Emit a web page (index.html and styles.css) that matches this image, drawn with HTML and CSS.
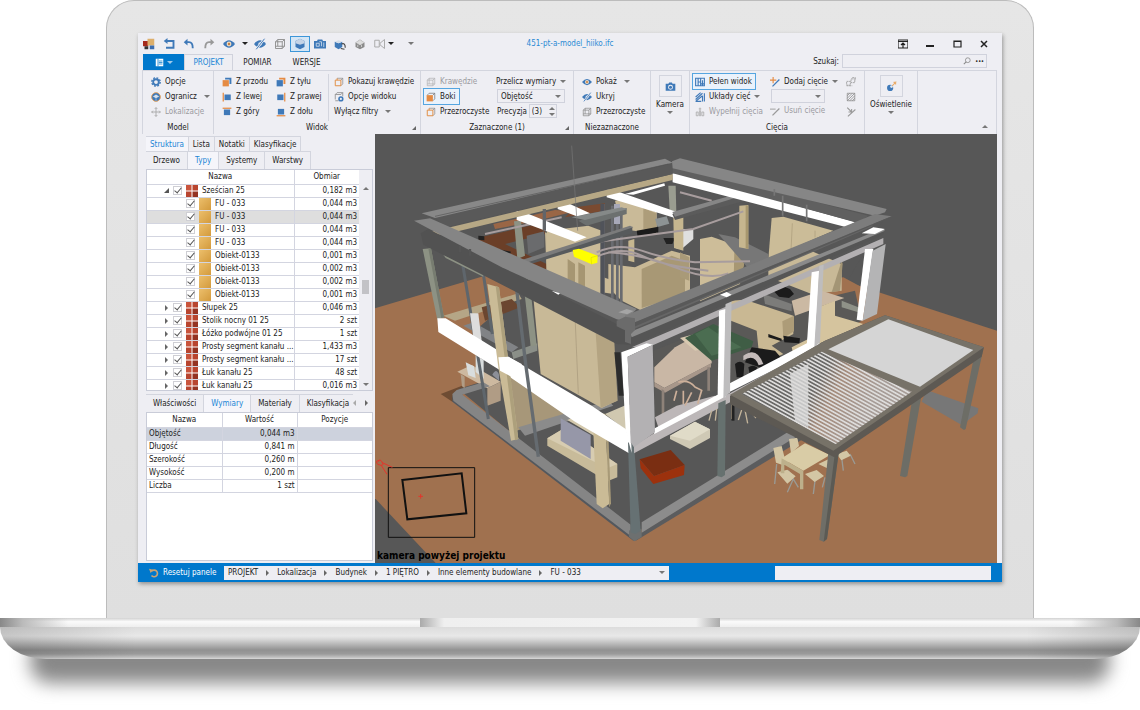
FILE: index.html
```html
<!DOCTYPE html>
<html lang="pl">
<head>
    <meta charset="UTF-8">
    <meta name="viewport" content="width=device-width, initial-scale=1.0">
    <title>451-pt-a-model_hiiko.ifc</title>
    <link rel="stylesheet" href="styles.css">
</head>
<body>
    <!-- shared icons -->
    <svg class="defs" width="0" height="0" aria-hidden="true">
        <symbol id="i-cube" viewBox="0 0 16 16"><path d="M2 5h9v9H2zM2 5l3-3h9v9l-3 3M11 5l3-3M5 2v9H2M5 11h9" fill="none" stroke="#8b8b8b" stroke-width="1.2"/></symbol>
        <symbol id="i-cube-o" viewBox="0 0 16 16"><path d="M5 2h9v9l-3 3M11 5l3-3" fill="none" stroke="#8b8b8b" stroke-width="1.2"/><path d="M2 5h9v9H2zM5 5V2" fill="none" stroke="#e08a3c" stroke-width="1.5"/></symbol>
        <symbol id="i-cube-s" viewBox="0 0 16 16"><path d="M2 5l3-3h9v9l-3 3M11 5l3-3" fill="none" stroke="#777" stroke-width="1.2"/><path d="M1 5h10v10H1z" fill="#e58b43"/></symbol>
        <symbol id="i-front" viewBox="0 0 16 16"><path d="M5 1h10v10h-3V4H5z" fill="#3f79b8"/><path d="M1 5h10v10H1z" fill="#e58b43"/></symbol>
        <symbol id="i-back" viewBox="0 0 16 16"><path d="M5 1h10v10h-3V4H5z" fill="#e58b43"/><path d="M1 5h10v10H1z" fill="#3f79b8"/></symbol>
        <symbol id="i-left" viewBox="0 0 16 16"><path d="M1 1h2v14H1z" fill="#e58b43"/><path d="M4 4h10v9H4z" fill="#3f79b8"/></symbol>
        <symbol id="i-right" viewBox="0 0 16 16"><path d="M13 1h2v14h-2z" fill="#e58b43"/><path d="M2 4h10v9H2z" fill="#3f79b8"/></symbol>
        <symbol id="i-top" viewBox="0 0 16 16"><path d="M1 1h14v2H1z" fill="#e58b43"/><path d="M3 4h10v9H3z" fill="#3f79b8"/></symbol>
        <symbol id="i-bottom" viewBox="0 0 16 16"><path d="M1 13h14v2H1z" fill="#e58b43"/><path d="M3 3h10v9H3z" fill="#3f79b8"/></symbol>
        <symbol id="i-eye" viewBox="0 0 16 16"><path d="M0 8q8-10 16 0q-8 10-16 0z" fill="#3f79b8"/><circle cx="8" cy="8" r="3.2" fill="#f0dcc4"/><circle cx="8" cy="8" r="1.6" fill="#c97f3d"/></symbol>
        <symbol id="i-hide" viewBox="0 0 16 16"><path d="M0 8q8-10 16 0q-8 10-16 0z" fill="#3f79b8"/><circle cx="8" cy="8" r="2.4" fill="#cfdcec"/><path d="M3 15L14 1" stroke="#eeeef3" stroke-width="3"/><path d="M3 15L14 1" stroke="#3f79b8" stroke-width="1.3"/></symbol>
        <symbol id="i-gear" viewBox="0 0 16 16"><circle cx="8" cy="8" r="4.5" fill="none" stroke="#3f79b8" stroke-width="3"/><circle cx="8" cy="8" r="6.7" fill="none" stroke="#3f79b8" stroke-width="2.2" stroke-dasharray="2.9 2.36"/></symbol>
        <symbol id="i-camera" viewBox="0 0 16 16"><path d="M1 4h4l1-2h4l1 2h4v10H1z" fill="#3f79b8"/><circle cx="8" cy="9" r="3.6" fill="#eeeef3"/><circle cx="8" cy="9" r="2.2" fill="#3f79b8"/></symbol>
        <symbol id="i-blocks" viewBox="0 0 12 12"><path d="M0 0h6v6H0z" fill="#c9543c"/><path d="M6 0h6v6H6zM0 6h6v6H0z" fill="#b8452f"/><path d="M6 6h6v6H6z" fill="#943322"/><path d="M6 0v12M0 6h12" stroke="#fff" stroke-width="1"/></symbol>
        <symbol id="i-undo" viewBox="0 0 16 16"><path d="M6 1L1 5.500L6 10z"/><path d="M4 5.500h4q5 0 5 8" fill="none" stroke="currentColor" stroke-width="2.500"/></symbol>
    </svg>

    <div class="laptop">
        <div class="lid">
            <div class="window">
                <header class="titlebar">
                    <div class="quick">
                        <button class="qbtn" aria-label="Program"><svg viewBox="0 0 16 16"><path d="M0 4h7v7H0z" fill="#a52a1c"/><path d="M6 1h9v9H6z" fill="#ddaf6c"/><path d="M9 10h6v5H9z" fill="#3b6db0"/><path d="M2 11h5v4H2z" fill="#333"/></svg></button>
                        <button class="qbtn" aria-label="Przywróć"><svg viewBox="0 0 16 16"><path d="M6 0L1 4l5 4z" fill="#3f79b8"/><path d="M4 4h10v9H4" fill="none" stroke="#3f79b8" stroke-width="2.500"/></svg></button>
                        <button class="qbtn blue" aria-label="Cofnij"><svg viewBox="0 0 16 16"><use href="#i-undo"/></svg></button>
                        <button class="qbtn grey flip" aria-label="Ponów"><svg viewBox="0 0 16 16"><use href="#i-undo"/></svg></button>
                        <button class="qbtn" aria-label="Pokaż"><svg><use href="#i-eye"/></svg></button>
                        <button class="qcaret" aria-label="Więcej"><i class="caret dark"></i></button>
                        <button class="qbtn" aria-label="Ukryj"><svg><use href="#i-hide"/></svg></button>
                        <button class="qbtn" aria-label="Przezroczyste"><svg><use href="#i-cube"/></svg></button>
                        <button class="qbtn on" aria-label="Bryła"><svg viewBox="0 0 16 16"><path d="M2 4l6-3 6 3v8l-6 3-6-3z" fill="#3f79b8"/><path d="M2 4l6-3 6 3v3l-6 2-6-2z" fill="#c5d4e6"/></svg></button>
                        <button class="qbtn" aria-label="Kamera"><svg viewBox="0 0 16 16"><path d="M0 4h4l1-2h6l1 2h4v10H0z" fill="#3f79b8"/><path d="M3 7h4v4H3zM7 5h3v6M13 6v6" fill="none" stroke="#dce6f1"/></svg></button>
                        <button class="qbtn" aria-label="Obróć"><svg viewBox="0 0 16 16"><path d="M1 5l5 2 5-2v7l-5 3-5-3z" fill="#3f79b8"/><path d="M1 5l5-2 5 2-5 2z" fill="#d4dde8"/><path d="M10 8q5-2 5 5M9 14l5 1" fill="none" stroke="#444" stroke-width="1.500"/></svg></button>
                        <button class="qbtn" aria-label="Szara bryła"><svg viewBox="0 0 16 16"><path d="M2 6l6-4 6 4v6l-6 3-6-3z" fill="#8b8b8b"/><path d="M3 6l5-3 5 3-5 3zM5 9v3M10 9v3" fill="#ddd" stroke="#ddd"/></svg></button>
                        <button class="qbtn" aria-label="Widok"><svg viewBox="0 0 16 16"><path d="M1 3h6v9H1zM8 7l6-5v12L8 9z" fill="none" stroke="#aaa" stroke-width="1.300"/></svg></button>
                        <button class="qcaret tight" aria-label="Więcej"><i class="caret dark"></i></button>
                        <button class="qcaret last" aria-label="Dostosuj"><i class="caret"></i></button>
                    </div>
                    <div class="title">451-pt-a-model_hiiko.ifc</div>
                    <div class="controls">
                        <button aria-label="Wstążka"><svg viewBox="0 0 10 10"><path d="M0 1h10v8H0zM0 2.500h10M5 9V4M3 6l2-2 2 2" fill="none" stroke="#222" stroke-width="1.200"/></svg></button>
                        <button aria-label="Minimalizuj"><svg viewBox="0 0 10 10"><path d="M1 6h8v2H1z" fill="#222"/></svg></button>
                        <button aria-label="Maksymalizuj"><svg viewBox="0 0 10 10"><path d="M2 2h7v6H2zM2 2.500h7" fill="none" stroke="#222" stroke-width="1.200"/></svg></button>
                        <button aria-label="Zamknij"><svg viewBox="0 0 10 10"><path d="M2 2l6 6M8 2L2 8" stroke="#222" stroke-width="1.500"/></svg></button>
                    </div>
                </header>

                <div class="tabbar">
                    <button class="file" aria-label="Menu"><svg viewBox="0 0 12 12"><path d="M1 1h10v10H1z" fill="#fff"/><path d="M4 1v10M5 4h5M5 6h5M5 8h5" stroke="#0078cc"/></svg><i class="caret light"></i></button>
                    <button class="tab active">PROJEKT</button>
                    <button class="tab">POMIAR</button>
                    <button class="tab">WERSJE</button>
                    <label class="search-label" for="search">Szukaj:</label>
                    <div class="search">
                        <input id="search" type="text">
                        <svg viewBox="0 0 10 10"><circle cx="6" cy="4" r="3" fill="none" stroke="#888"/><path d="M4 6L1 9" stroke="#888" stroke-width="1.300"/></svg>
                        <b>•••</b>
                    </div>
                </div>

                <section class="ribbon">
                    <div class="group">
                        <div class="cols">
                            <div class="col">
                                <button class="cmd"><svg><use href="#i-gear"/></svg>Opcje</button>
                                <button class="cmd"><svg viewBox="0 0 16 16"><circle cx="8" cy="8" r="7" fill="#3f79b8" stroke="#e0a060" stroke-width="1.500"/><path d="M3 7l5-3 5 3-5 3z" fill="#d5e0ec"/><path d="M8 10v4" stroke="#d5e0ec"/></svg>Ogranicz<i class="caret far"></i></button>
                                <button class="cmd off"><svg viewBox="0 0 16 16"><path d="M8 1v14M1 8h14M6 3l2-2 2 2M6 13l2 2 2-2M3 6L1 8l2 2M13 6l2 2-2 2" fill="none" stroke="#aaa" stroke-width="1.500"/></svg>Lokalizacje</button>
                            </div>
                        </div>
                        <h2>Model</h2>
                    </div>
                    <div class="group">
                        <div class="cols">
                            <div class="col c-view">
                                <button class="cmd"><svg><use href="#i-front"/></svg>Z przodu</button>
                                <button class="cmd"><svg><use href="#i-left"/></svg>Z lewej</button>
                                <button class="cmd"><svg><use href="#i-top"/></svg>Z góry</button>
                            </div>
                            <div class="col c-view">
                                <button class="cmd"><svg><use href="#i-back"/></svg>Z tyłu</button>
                                <button class="cmd"><svg><use href="#i-right"/></svg>Z prawej</button>
                                <button class="cmd"><svg><use href="#i-bottom"/></svg>Z dołu</button>
                            </div>
                            <div class="col ruled">
                                <button class="cmd"><svg><use href="#i-cube-o"/></svg>Pokazuj krawędzie</button>
                                <button class="cmd"><svg viewBox="0 0 16 16"><path d="M2 12V4l3-3h9v6M2 4h9l3-3M2 14h5" fill="none" stroke="#8b8b8b" stroke-width="1.300"/><circle cx="11" cy="11" r="3" fill="none" stroke="#3f79b8" stroke-width="2.500"/></svg>Opcje widoku</button>
                                <button class="cmd">Wyłącz filtry<i class="caret far"></i></button>
                            </div>
                        </div>
                        <h2>Widok</h2><i class="corner"></i>
                    </div>
                    <div class="group">
                        <div class="cols">
                            <div class="col c-edges">
                                <button class="cmd off"><svg><use href="#i-cube"/></svg>Krawędzie</button>
                                <button class="cmd picked"><svg><use href="#i-cube-s"/></svg>Boki</button>
                                <button class="cmd"><svg><use href="#i-cube-o"/></svg>Przezroczyste</button>
                            </div>
                            <div class="col">
                                <button class="cmd">Przelicz wymiary<i class="caret"></i></button>
                                <div class="pick"><select aria-label="Wymiar"><option>Objętość</option><option>Długość</option></select><i class="caret"></i></div>
                                <div class="precision"><label for="precision">Precyzja</label><div class="spin"><input id="precision" type="text" value="(3)"><span><i class="caret up"></i><i class="caret"></i></span></div></div>
                            </div>
                        </div>
                        <h2>Zaznaczone (1)</h2><i class="corner"></i>
                    </div>
                    <div class="group">
                        <div class="cols">
                            <div class="col">
                                <button class="cmd"><svg><use href="#i-eye"/></svg>Pokaż<i class="caret far"></i></button>
                                <button class="cmd"><svg><use href="#i-hide"/></svg>Ukryj</button>
                                <button class="cmd"><svg><use href="#i-cube"/></svg>Przezroczyste</button>
                            </div>
                        </div>
                        <h2>Niezaznaczone</h2>
                    </div>
                    <div class="group">
                        <button class="big"><span><svg><use href="#i-camera"/></svg></span>Kamera<i class="caret"></i></button>
                    </div>
                    <div class="group">
                        <div class="cols">
                            <div class="col c-cut">
                                <button class="cmd picked"><svg viewBox="0 0 16 16"><path d="M1 2h14v12H1zM5 2v12M9 2v12M5 8h4M12 5v9M9 11h6" fill="none" stroke="#3f79b8" stroke-width="1.800"/></svg>Pełen widok</button>
                                <button class="cmd"><svg viewBox="0 0 16 16"><path d="M1 8L9 1M1 12L12 2M1 15h9M1 15L12 6M12 6v9M15 2v13" fill="none" stroke="#3f79b8" stroke-width="1.800"/></svg>Układy cięć<i class="caret"></i></button>
                                <button class="cmd off"><svg viewBox="0 0 16 16"><path d="M2 8h3v6H2zM7 6h2v8H7zM11 8h3v6h-3zM8 1v4M6 3h4" fill="none" stroke="#aaa" stroke-width="1.300"/></svg>Wypełnij cięcia</button>
                            </div>
                            <div class="col c-add">
                                <button class="cmd"><svg viewBox="0 0 16 16"><path d="M5 0v10M0 5h10" stroke="#e58b43" stroke-width="1.800"/><path d="M4 15L15 4" stroke="#3f79b8" stroke-width="2"/></svg>Dodaj cięcie<i class="caret"></i></button>
                                <div class="pick narrow"><select aria-label="Cięcie"><option></option></select><i class="caret"></i></div>
                                <button class="cmd off"><svg viewBox="0 0 16 16"><path d="M0 5h9" stroke="#aaa" stroke-width="1.800"/><path d="M4 15L15 4" stroke="#999" stroke-width="2"/></svg>Usuń cięcie</button>
                            </div>
                            <div class="col">
                                <button class="cmd" aria-label="Zamień"><svg viewBox="0 0 16 16"><path d="M1 7h6v6H1zM8 3h6v6H8zM10 1h5v4M1 14h9" fill="none" stroke="#999" stroke-width="1.300" stroke-dasharray="3 1"/></svg></button>
                                <button class="cmd" aria-label="Kreskowanie"><svg viewBox="0 0 16 16"><path d="M2 2h12v12H2zM2 6l4-4M2 10l8-8M2 14L14 2M6 14l8-8M10 14l4-4" fill="none" stroke="#888" stroke-width="1.200"/></svg></button>
                                <button class="cmd" aria-label="Odwróć"><svg viewBox="0 0 16 16"><path d="M2 1l7 7M9 3v5H4M3 15L15 4" fill="none" stroke="#999" stroke-width="1.700"/></svg></button>
                            </div>
                        </div>
                        <h2>Cięcia</h2>
                    </div>
                    <div class="group">
                        <button class="big"><span><svg viewBox="0 0 16 16"><circle cx="6" cy="10" r="4.500" fill="#3f79b8"/><circle cx="8" cy="8" r="2" fill="#dfe8f2"/><path d="M9 7l6-6M11 2h3v3" fill="none" stroke="#e9ab68" stroke-width="1.500"/></svg></span>Oświetlenie<i class="caret"></i></button>
                    </div>
                    <div class="group end"><i class="caret up"></i></div>
                </section>

                <main class="work">
                    <aside class="side">
                        <div class="tabs slim">
                            <button class="active">Struktura</button><button>Lista</button><button>Notatki</button><button>Klasyfikacje</button>
                        </div>
                        <div class="tabs">
                            <button>Drzewo</button><button class="active">Typy</button><button>Systemy</button><button>Warstwy</button>
                        </div>
                        <div class="tree">
                            <table>
                                <thead><tr><th>Nazwa</th><th class="val">Obmiar</th></tr></thead>
                                <tbody>
                                    <tr><td><label class="node"><i class="arrow open"></i><input type="checkbox" checked><svg><use href="#i-blocks"/></svg><span>Sześcian 25</span></label></td><td>0,182 m3</td></tr>
                                    <tr><td><label class="node leaf"><input type="checkbox" checked><i class="box"></i><span>FU - 033</span></label></td><td>0,044 m3</td></tr>
                                    <tr class="selected"><td><label class="node leaf"><input type="checkbox" checked><i class="box"></i><span>FU - 033</span></label></td><td>0,044 m3</td></tr>
                                    <tr><td><label class="node leaf"><input type="checkbox" checked><i class="box"></i><span>FU - 033</span></label></td><td>0,044 m3</td></tr>
                                    <tr><td><label class="node leaf"><input type="checkbox" checked><i class="box"></i><span>FU - 033</span></label></td><td>0,044 m3</td></tr>
                                    <tr><td><label class="node leaf"><input type="checkbox" checked><i class="box"></i><span>Obiekt-0133</span></label></td><td>0,001 m3</td></tr>
                                    <tr><td><label class="node leaf"><input type="checkbox" checked><i class="box"></i><span>Obiekt-0133</span></label></td><td>0,002 m3</td></tr>
                                    <tr><td><label class="node leaf"><input type="checkbox" checked><i class="box"></i><span>Obiekt-0133</span></label></td><td>0,002 m3</td></tr>
                                    <tr><td><label class="node leaf"><input type="checkbox" checked><i class="box"></i><span>Obiekt-0133</span></label></td><td>0,001 m3</td></tr>
                                    <tr><td><label class="node"><i class="arrow"></i><input type="checkbox" checked><svg><use href="#i-blocks"/></svg><span>Słupek 25</span></label></td><td>0,046 m3</td></tr>
                                    <tr><td><label class="node"><i class="arrow"></i><input type="checkbox" checked><svg><use href="#i-blocks"/></svg><span>Stolik nocny 01 25</span></label></td><td>2 szt</td></tr>
                                    <tr><td><label class="node"><i class="arrow"></i><input type="checkbox" checked><svg><use href="#i-blocks"/></svg><span>Łóżko podwójne 01 25</span></label></td><td>1 szt</td></tr>
                                    <tr><td><label class="node"><i class="arrow"></i><input type="checkbox" checked><svg><use href="#i-blocks"/></svg><span>Prosty segment kanału ...</span></label></td><td>1,433 m3</td></tr>
                                    <tr><td><label class="node"><i class="arrow"></i><input type="checkbox" checked><svg><use href="#i-blocks"/></svg><span>Prosty segment kanału ...</span></label></td><td>17 szt</td></tr>
                                    <tr><td><label class="node"><i class="arrow"></i><input type="checkbox" checked><svg><use href="#i-blocks"/></svg><span>Łuk kanału 25</span></label></td><td>48 szt</td></tr>
                                    <tr><td><label class="node"><i class="arrow"></i><input type="checkbox" checked><svg><use href="#i-blocks"/></svg><span>Łuk kanału 25</span></label></td><td>0,016 m3</td></tr>
                                </tbody>
                            </table>
                            <div class="scroll"><i class="caret up"></i><b></b><i class="caret"></i></div>
                        </div>
                        <div class="tabs lower">
                            <button>Właściwości</button><button class="active">Wymiary</button><button>Materiały</button><button>Klasyfikacja</button><i class="arrow back"></i><i class="arrow"></i>
                        </div>
                        <div class="props">
                            <table>
                                <thead><tr><th>Nazwa</th><th>Wartość</th><th>Pozycje</th></tr></thead>
                                <tbody>
                                    <tr class="selected"><td>Objętość</td><td>0,044 m3</td><td></td></tr>
                                    <tr><td>Długość</td><td>0,841 m</td><td></td></tr>
                                    <tr><td>Szerokość</td><td>0,260 m</td><td></td></tr>
                                    <tr><td>Wysokość</td><td>0,200 m</td><td></td></tr>
                                    <tr><td>Liczba</td><td>1 szt</td><td></td></tr>
                                </tbody>
                            </table>
                        </div>
                    </aside>

                    <div class="view">
                        <svg class="scene" viewBox="0 0 1866 1287" preserveAspectRatio="xMinYMid slice" role="img" aria-label="Model 3D">
                            <defs>
                                <pattern id="louvre" width="40" height="10" patternUnits="userSpaceOnUse" patternTransform="rotate(29)">
                                    <rect width="40" height="5" fill="#dddcdb"/>
                                </pattern>
                                <linearGradient id="under" x1="0" y1="0" x2="1" y2=".3"><stop offset=".5" stop-color="#6a6967"/><stop offset=".62" stop-color="#a58c7c"/><stop offset=".85" stop-color="#a79d98"/></linearGradient>
                            </defs>
                            <rect width="1866" height="1287" fill="#575757"/>
                            <!-- ground -->
                            <path d="M0 523L330 425 800 300 1405 440 1866 590V1287H182L0 1093z" fill="#a0714f"/>
                            <path d="M197 780L267 753 260 800 232 803z" fill="#6e4c33"/>
                            <!-- roof opening, floors -->
                            <path d="M150 250L890 90 1530 250 1400 470 1080 700 750 640 440 460z" fill="#575757"/>
                            <path d="M250 765L330 740 300 590 450 460 1440 470 1400 620 1290 900 777 1200z" fill="#575757"/>
                            <path d="M1340 440L1405 430 1480 470 1450 560 1330 560z" fill="#a0714f"/>
                            <path d="M315 310L510 265 510 300 390 330 515 390 515 410 300 335z" fill="#6b3f28"/>
                            <path d="M355 270L540 228 600 232 480 262 360 285z" fill="#9a6646"/>
                            <path d="M600 220L690 208 690 230 570 250z" fill="#7a4a30"/>
                            <!-- left rooms -->
                            <path d="M205 545L430 478 440 495 240 560z" fill="#b5a686"/>
                            <path d="M320 520L410 495 435 520 330 560z" fill="#6b4630"/>
                            <path d="M265 575L295 565 430 640 410 655z" fill="#818386"/>
                            <path d="M410 655L487 628 487 650 415 675z" fill="#8b8f88"/>
                            <path d="M510 295L580 330 600 400 715 440 715 480 585 460 515 420z" fill="#c8b997"/>
                            <path d="M400 680L600 790V832L425 890z" fill="#a79779"/>
                            <path d="M430 880L700 800 715 815 450 905z" fill="#8b8b8b"/>
                            <path d="M475 490L600 545 715 622 725 800 680 822 497 720z" fill="#c8b997"/>
                            <path d="M662 596L718 625 728 800 677 822z" fill="#b4a482"/>
                            <path d="M600 545L610 780" stroke="#a6977a" stroke-width="2"/>
                            <!-- desk -->
                            <path d="M247 713L290 693 377 743 337 763z" fill="#cdb9a0"/>
                            <path d="M337 763L377 743V800L337 815zM257 720l12 8v35l-8-6z" fill="#b09c85"/>
                            <path d="M272 685L297 697 302 732 280 724zM302 664l24 14v56l-24-20z" fill="#d9dddd"/>
                            <path d="M352 722q12-22 20 0v18z" fill="#8c8f98"/>
                            <!-- base -->
                            <path d="M232 785L767 1200 777 1222 232 803z" fill="#53585e"/>
                            <path d="M232 780L245 768 325 745 345 757 262 782 767 1172V1206L235 800z" fill="#858585"/>
                            <path d="M800 1195L1265 903 1300 905 780 1222z" fill="#5b5c5e"/>
                            <path d="M800 1165L1245 890 1268 905 800 1196z" fill="#8c8c8c"/>
                            <path d="M762 1190l20-15 18 12v22l-22 13-16-14z" fill="#6d7070"/>
                            <!-- bench and tv -->
                            <path d="M517 913L567 883 727 990V1030L697 1042 517 935z" fill="#c8bb9a"/>
                            <path d="M517 913L567 883 727 990 697 1003z" fill="#d7ccb1"/>
                            <path d="M577 858L622 838 747 895 690 925z" fill="#d3c8ac"/>
                            <path d="M557 853L647 903V975L557 920z" fill="#9697a8"/>
                            <path d="M690 840L760 810 830 850 760 895z" fill="#d0c8b0"/>
                            <path d="M652 830L690 840 703 1110 683 1123 665 1110z" fill="#cabb96"/>
                            <path d="M690 840l8 8 10 260-5 12z" fill="#a89a78"/>
                            <!-- sofas -->
                            <path d="M794 976L887 948 929 993 837 1026z" fill="#7a2e12"/>
                            <path d="M794 976L837 1026 835 1050 797 1003zM837 1026L929 993 927 1023 835 1050z" fill="#9c310d"/>
                            <path d="M885 905L960 863 1005 886V912L945 945 885 915z" fill="#cfc9b5"/>
                            <path d="M885 905L960 863 1005 886 945 920z" fill="#e0dbc8"/>
                            <!-- rooms on the right side -->
                            <path d="M835 650L1060 560 1440 470 1460 560 1330 640 1060 750 840 860z" fill="#5a5957"/>
                            <path d="M1180 378L1260 330 1400 390 1400 470 1310 480 1180 430z" fill="#c8b997"/>
                            <path d="M838 700L900 640 945 615 1010 645 1010 688 868 762 838 745z" fill="#c9b7a5"/>
                            <path d="M868 762L1008 688V700L870 776 838 758V745z" fill="#a8978a"/>
                            <path d="M915 612L960 600 1010 640 960 650z" fill="#d8c9b0"/>
                            <path d="M860 765L868 770V860H860zM997 700h8v70h-8z" fill="#8e8279"/>
                            <path d="M840 850L905 815 1020 785 1020 800 850 880z" fill="#bdb7b8"/>
                            <path d="M930 612L1015 570 1135 622 1130 640 1010 680z" fill="#3f5d45"/>
                            <path d="M960 600L1000 580 1030 600 1100 640 1010 665z" fill="#4b6d51"/>
                            <path d="M1068 500L1110 497 1255 545V600L1190 635 1225 660 1155 690 1145 590 1068 560z" fill="#c9b893"/>
                            <path d="M1222 562L1257 545V592L1225 612z" fill="#ad9c78"/>
                            <path d="M1165 480L1250 510V532L1170 510z" fill="#7c7c7a"/>
                            <path d="M1250 500L1340 470 1408 492 1260 545z" fill="#cbb9a3"/>
                            <path d="M1330 520L1380 500 1380 545 1465 570 1390 605 1255 660 1250 640 1330 600z" fill="#d5c49e"/>
                            <path d="M1400 500L1450 520V535L1400 520z" fill="#8f9288"/>
                            <path d="M1400 380L1370 475 1395 470 1403 390z" fill="#a39575"/>
                            <path d="M1190 465l25-12 30 12 12 15-15 12-30-4zM1130 640l70 10 30 35-60 20-60-20zM1225 605l50 8-2 15-45-3zM1180 600l40 14v8l-40-12zM1080 690q15-14 28 0l-3 40h-20zM1120 700q14-10 26 0l-4 20h-18z" fill="#1b1b1b"/>
                            <path d="M1105 665q40-30 60 25l-14 4q-12-36-46-15z" fill="#c4bbb9"/>
                            <path d="M910 745q30-10 50 14l20 10-12 40M905 770l-8 30M925 770v40M950 775l-20 40" fill="none" stroke="#cdb09a" stroke-width="5"/>
                            <!-- room seen through the roof -->
                            <path d="M720 200L745 195 845 235V300L740 285z" fill="#c9ba98"/>
                            <path d="M805 222L843 238V300L805 285z" fill="#ad9d7a"/>
                            <path d="M515 290L640 275 680 290 680 480 580 460 515 420z" fill="#cbbc99"/>
                            <path d="M578 375L600 390V460L578 450zM610 385l20 10v80l-20-10z" fill="#a69672"/>
                            <path d="M780 400L890 350 945 365 945 480 800 530 740 500 700 460V390z" fill="#c9b996"/>
                            <path d="M800 405L890 365 930 380V480L800 522z" fill="#a89875"/>
                            <path d="M975 315L1010 308 1115 345 1095 450 975 502z" fill="#cdbd99"/>
                            <path d="M1078 352L1117 342 1100 425 1076 440z" fill="#a79773"/>
                            <path d="M1190 252L1225 248 1375 290 1180 375z" fill="#cbbc98"/>
                            <path d="M1252 268L1248 350M1320 290v20" stroke="#a99a78" stroke-width="2"/>
                            <path d="M1030 300L1080 310 1180 360 1180 400 1117 400z" fill="#777"/>
                            <path d="M915 355L943 370V440L915 430z" fill="#a99a78"/>
                            <path d="M910 285h45v30l-35 30h-15z" fill="#dfdfdf"/>
                            <path d="M840 255l35-8 8 22-35 10z" fill="#8d9394"/>
                            <path d="M785 290L850 278V295L788 310z" fill="#1b1b1b"/>
                            <path d="M865 312h35l-8 18h-18zM310 305l18 2v12l-18-2zM368 345l40 8-5 12z" fill="#222"/>
                            <path d="M455 305L508 292V340L460 360z" fill="#6a6b6d"/>
                            <path d="M1093 215L1120 213V345L1092 340zM760 320l18-5v70l-18-5zM895 250h30v100l-28-8z" fill="#c6b68f"/>
                            <path d="M1112 213l8 2v130l-8-2z" fill="#a7976f"/>
                            <path d="M880 155h22l2 80-20-8z" fill="#9a9d90"/>
                            <path d="M417 262L438 260 450 365 427 375zM443 430l20 4 22 200-18 3z" fill="#8d9284"/>
                            <!-- ducts -->
                            <path d="M685 210V500M712 215V505M727 215V515M739 240V515" fill="none" stroke="#696b70" stroke-width="8"/>
                            <path d="M682 210V495" stroke="#50535a" stroke-width="12"/>
                            <path d="M726 210V270" stroke="#a7a8b8" stroke-width="18"/>
                            <path d="M610 260L755 222V240L635 275z" fill="#6c706f"/>
                            <path d="M590 250L740 220 757 226 630 258z" fill="#858988"/>
                            <path d="M665 355Q730 325 800 350T960 385L1125 382M665 368Q740 335 800 365T1000 410M700 355Q800 360 900 400T1060 418M660 325L955 285 1105 232M560 250L330 300M915 175L1010 200" fill="none" stroke="#a89d9e" stroke-width="6"/>
                            <!-- inner beams -->
                            <path d="M450 382L772 278V298L460 392z" fill="#575a5c"/>
                            <path d="M440 378L765 275 775 280 450 388z" fill="#7b7b7b"/>
                            <path d="M425 232L440 232 635 310 600 323 425 258zM548 203L570 203 645 238 605 247 548 225zM695 167L715 168 908 235 900 252 695 190zM750 180L868 148 870 155 775 182z" fill="#fff"/>
                            <path d="M892 240L1105 178 1110 200 900 258z" fill="#5b5b5b"/>
                            <path d="M892 234L1100 176 1110 182 900 248z" fill="#868686"/>
                            <path d="M892 118L920 118 1440 265 1415 280 893 145z" fill="#fff"/>
                            <!-- back beams -->
                            <path d="M150 298L893 120V138L230 296 150 308z" fill="#b7a885"/>
                            <path d="M180 250L893 88V120L210 280z" fill="#595959"/>
                            <path d="M140 238L870 74 893 86 180 252z" fill="#888"/>
                            <path d="M180 247L880 90" stroke="#555" stroke-width="2"/>
                            <path d="M893 98L915 98 1480 245 1450 266 893 118z" fill="#606060"/>
                            <path d="M891 82L915 73 1535 225 1530 235 1500 245 893 103z" fill="#868686"/>
                            <path d="M1198 165v20M1223 185v60M1295 212v50" stroke="#777" stroke-width="5"/>
                            <!-- posts on the left -->
                            <path d="M143 345L168 343 207 550 187 557z" fill="#8d9284"/>
                            <path d="M160 343l8 0 39 207-8 3z" fill="#777c70"/>
                            <path d="M262 385L300 615 340 855M325 420L352 600" fill="none" stroke="#5f666c" stroke-width="9"/>
                            <path d="M285 538h25l12 100-24-8z" fill="#ddd"/>
                            <path d="M205 362L325 415V428L212 372z" fill="#8d9284"/>
                            <!-- floor beam -->
                            <path d="M187 553L212 553 400 668 650 815 752 885 777 955 762 958 600 863 380 712 190 594z" fill="#fff"/>
                            <path d="M337 450L372 460 430 915 408 920 370 700z" fill="#cabb96"/>
                            <path d="M362 455l10 5 58 455-10 4z" fill="#ada07c"/>
                            <path d="M370 670L400 668 440 690 440 745 375 710z" fill="#fff"/>
                            <path d="M418 408L452 690 490 968" fill="none" stroke="#656b70" stroke-width="10"/>
                            <path d="M759 925L777 933 797 1190 781 1200 767 1195z" fill="#667173"/>
                            <!-- right side frame -->
                            <path d="M777 935L842 895 1050 785 1345 630 1345 648 1065 805 777 958z" fill="#bcb7b8"/>
                            <path d="M835 885L1050 770 1050 788 838 900zM1060 750L1310 620 1345 632 1062 775z" fill="#fff"/>
                            <path d="M770 640L915 578 1525 312V330L915 598 830 635z" fill="#b3b0b2"/>
                            <path d="M1032 530L1052 525V790L1028 782z" fill="#fff"/>
                            <path d="M1052 490L1070 487 1065 775 1045 795z" fill="#bebdbe"/>
                            <path d="M1310 415L1333 410 1320 640 1295 640z" fill="#fff"/>
                            <path d="M1333 395L1346 392 1335 625 1318 640z" fill="#bebdbe"/>
                            <path d="M1470 345L1495 345 1463 560 1445 557z" fill="#fff"/>
                            <path d="M1493 350L1532 330 1506 540 1463 560z" fill="#b4b4b5"/>
                            <path d="M739 655L815 628 834 632 758 668 770 957 752 890z" fill="#fff"/>
                            <path d="M758 668L833 632 840 895 777 940 767 925z" fill="#b3b1b3"/>
                            <path d="M718 655h18l10 130h-15z" fill="#2c2c2c"/>
                            <!-- front beams -->
                            <path d="M137 298L160 285 765 590V632L725 630 400 462 145 332z" fill="#525252"/>
                            <path d="M765 602L1525 290V302L770 634z" fill="#555"/>
                            <path d="M765 594L1520 284 1530 290 770 610z" fill="#8a8a8a"/>
                            <path d="M755 570L1500 262 1490 278 765 590z" fill="#666"/>
                            <path d="M117 260L165 253 785 525 750 562 725 556 380 400z" fill="#858585"/>
                            <path d="M750 545L1500 240 1550 247 755 575z" fill="#7c7c7c"/>
                            <path d="M755 575L1550 247 1530 258 760 586z" fill="#595959"/>
                            <path d="M725 560l25-12 30 5v35l-12 12v30l-18-6v-35l-25-12z" fill="#6b6b6b"/>
                            <path d="M730 535l25-10 20 6-18 10z" fill="#a5a5a5"/>
                            <path d="M1460 298L1495 280 1530 285 1500 300zM1035 482l20-8 15 8-15 8zM530 470l25 8-5 4z" fill="#fff"/>
                            <path d="M255 335v20M285 345v20" stroke="#555" stroke-width="7"/>
                            <path d="M508 225v65" stroke="#626569" stroke-width="10"/>
                            <path d="M590 35L608 290" stroke="#777" stroke-width="2"/>
                            <!-- picked element -->
                            <path d="M593 348L612 344 668 365 667 386 650 391 597 368z" fill="#ff0"/>
                            <path d="M650 391l-2-20 20-6" fill="none" stroke="#dede00" stroke-width="2"/>
                            <!-- lower post and slab -->
                            <path d="M1030 808L1052 798 1050 1023 1040 1030 1027 1026z" fill="#66716f"/>
                            <path d="M1640 803L1655 768 1810 823 1808 838 1760 873z" fill="#777"/>
                            <path d="M1070 800v55M1010 830l-8 30M1025 825l-4 35M1100 828l-10 30M1110 828l8 40M1125 830l18 22" stroke="#c3b49a" stroke-width="4"/>
                            <path d="M1074 805v55" stroke="#222" stroke-width="9"/>
                            <!-- garden table -->
                            <path d="M1205 990l-6 60M1255 1035l-18 40M1240 1010l30 50M1320 1040l-5 40M1350 1030l-8 30M1400 970l5 40M1425 960l15 30" stroke="#9a9a94" stroke-width="4"/>
                            <path d="M1195 942l25-6 10 40 20 4-25 14-22-8zM1242 915l25-4 5 25-24 22zM1207 1015l30-8 25 20-25 22zM1290 1020l35-12 22 18-28 18zM1330 990l30-14v28zM1385 960l30-10 12 15-28 14z" fill="#d3c6a4"/>
                            <path d="M1220 973L1290 928 1365 963 1285 1010z" fill="#d9cca6"/>
                            <path d="M1220 973L1285 1010V1066H1275V1020L1228 992V1018H1217z" fill="#bdb08b"/>
                            <!-- pergola -->
                            <path d="M1360 955L1392 950 1356 1215 1346 1223 1333 1218z" fill="#6f6e67"/>
                            <path d="M1380 955l12-5-36 265-10 8z" fill="#5b5a54"/>
                            <path d="M1612 793L1640 780 1597 1026 1590 1030 1575 1026zM1795 678L1823 655 1772 885 1767 888 1755 880z" fill="#6d6d66"/>
                            <path d="M1065 785L1350 620 1530 544 1827 640 1820 668 1378 970 1065 810z" fill="#5d5953"/>
                            <path d="M1065 782L1350 620 1530 544 1827 640 1375 950z" fill="#777268"/>
                            <path d="M1100 780L1340 653 1610 773 1382 930z" fill="url(#under)"/>
                            <path d="M1245 720L1300 690 1300 880 1260 860z" fill="#c6c6c6"/>
                            <path d="M1100 780L1340 653 1610 773 1382 930z" fill="url(#louvre)"/>
                            <path d="M1360 646L1540 556 1795 648 1635 758z" fill="#d5d5d5"/>
                            <!-- navigator -->
                            <g fill="none" stroke="#111">
                                <path d="M40 1001H299V1210H40z" stroke-width="3"/>
                                <path d="M82 1038L260 1018 274 1138 97 1156z" stroke-width="6"/>
                                <path d="M8 985q6-14 14 0t-14 6q-10-12 6-12M20 985l32 15M18 993l18 28M137 1080v14M130 1087h14" stroke="#e3362c" stroke-width="3"/>
                            </g>
                        </svg>
                        <p class="hint">kamera powyżej projektu</p>
                    </div>
                </main>

                <footer class="status">
                    <button class="reset"><svg viewBox="0 0 12 12"><path d="M3 4a4 4 0 1 1 0 5" fill="none" stroke="#c9a374" stroke-width="2"/><path d="M0 1l5 1-3 4z" fill="#c9a374"/></svg>Resetuj panele</button>
                    <nav class="crumbs">
                        <a href="#">PROJEKT</a><i class="arrow"></i><a href="#">Lokalizacja</a><i class="arrow"></i><a href="#">Budynek</a><i class="arrow"></i><a href="#">1 PIĘTRO</a><i class="arrow"></i><a href="#">Inne elementy budowlane</a><i class="arrow"></i><a href="#">FU - 033</a>
                        <i class="caret"></i>
                    </nav>
                    <div class="progress"></div>
                </footer>
            </div>
        </div>
        <div class="hinge"><div class="notch"></div></div>
        <div class="base"></div>
    </div>
</body>
</html>
```
FILE: styles.css
```css
*{
    margin: 0;
    padding: 0;
    box-sizing: border-box;
}

html,body{
    height: 100%;
}

body{
    background-color: #fff;
    color: #222;
    font: 8px/13px "DejaVu Sans Condensed", "DejaVu Sans", sans-serif;
    overflow: hidden;
}

button,input,select{
    font: inherit;
    color: inherit;
    background: none;
    border: 0;
}

button{
    white-space: nowrap;
    cursor: pointer;
}

.defs{
    position: absolute;
}

/* laptop */

.laptop{
    height: 100%;
    display: flex;
    flex-direction: column;
    padding-bottom: 51px;
}

.lid{
    flex: 1;
    min-height: 0;
    display: flex;
    margin: 0 106px;
    padding: 32px 31px 36px;
    background: linear-gradient(#e6e6e6, #dfdfdf);
    border: solid #bcbcbc;
    border-width: 1px 1px 0;
    border-radius: 28px 28px 0 0;
}

.hinge{
    height: 9px;
    display: flex;
    justify-content: center;
    background: linear-gradient(90deg, #888, #bbb 2%, transparent 6%, transparent 94%, #bbb 98%, #888), linear-gradient(#d2d2d2, #fafafa 40%, #eee);
}

.notch{
    width: 300px;
    background: linear-gradient(90deg, #aaa, #efefef 8%, #f2f2f2 92%, #aaa);
}

.base{
    position: relative;
    height: 32px;
    border-radius: 0 0 46px 46px / 0 0 32px 32px;
    background: linear-gradient(90deg, rgba(0,0,0,.15), transparent 12%, transparent 90%, rgba(0,0,0,.15)), linear-gradient(#dcdcdc, #e8e8e8 28%, #d8d8d8 38%, #919191 72%, #9a9a9a 84%, #c8c8c8 97%, #ddd);
}

/* shadow on the desk */
.base::after{
    content: "";
    position: absolute;
    z-index: -1;
    inset: 10px 30px -24px;
    border-radius: 20px;
    background: #888;
    filter: blur(9px);
}

/* window */

.window{
    flex: 1;
    min-width: 0;
    display: flex;
    flex-direction: column;
    background: #eeeef3;
    box-shadow: 1px 2px 4px rgba(0,0,0,.35);
}

.titlebar{
    height: 21px;
    display: flex;
    align-items: center;
    justify-content: space-between;
}

.quick{
    display: flex;
    align-items: center;
    padding-left: 1px;
}

.qbtn{
    width: 20px;
    height: 16px;
    display: flex;
    align-items: center;
    justify-content: center;
}

.qbtn svg{
    width: 12px;
    height: 12px;
}

.qbtn.on{
    border: 1px solid #3c96d8;
    background: #d5e6f5;
}

.blue{
    color: #3f79b8;
    fill: #3f79b8;
}

.grey{
    color: #999;
    fill: #999;
}

.flip svg{
    transform: scaleX(-1);
}

.qcaret{
    width: 11px;
    height: 16px;
}

.qcaret.tight{
    margin-left: -5px;
}

.qcaret.last{
    margin-left: 9px;
}

.title{
    color: #2a8ad4;
    margin-right: 174px;
}

.controls{
    display: flex;
    gap: 17px;
    margin-right: 13px;
}

.controls button{
    width: 10px;
    height: 10px;
}

.controls svg{
    display: block;
}

.caret{
    display: inline-block;
    border: 3px solid transparent;
    border-top-color: #777;
    border-bottom: 0;
    vertical-align: middle;
}

.caret.dark{
    border-top-color: #222;
}

.caret.light{
    border-top-color: #9fc9ea;
}

.caret.up{
    border-top: 0;
    border-bottom: 3px solid #777;
}

.caret.far{
    margin-left: 3px;
}

.arrow{
    border: 3px solid transparent;
    border-left-color: #666;
    border-right: 0;
}

.arrow.back{
    border-left: 0;
    border-right: 3px solid #aaa;
}

.arrow.open{
    border: 0;
    border-left: 5px solid transparent;
    border-bottom: 5px solid #555;
}

.tabbar{
    display: flex;
    height: 16px;
    padding: 0 15px 0 5px;
}

.file{
    width: 41px;
    background: #0078cc;
    display: flex;
    align-items: center;
    justify-content: center;
    gap: 3px;
}

.file svg{
    width: 9px;
    height: 9px;
}

.tab{
    width: 49px;
}

.tab.active{
    color: #1a86d6;
    border: solid #d0d2dc;
    border-width: 1px 1px 0;
}

.search-label{
    margin-left: auto;
    padding: 1px 3px 0 0;
}

.search{
    width: 145px;
    height: 14px;
    display: flex;
    align-items: center;
    gap: 4px;
    padding-right: 2px;
    border: 1px solid #d0d2dc;
}

.search input{
    flex: 1;
    min-width: 0;
}

.search svg{
    width: 8px;
    height: 8px;
}

.search b{
    font-size: 5px;
}

/* ribbon */

.ribbon{
    display: grid;
    grid-template-columns: 71px 207px 153px 77px 39px 175px 53px 1fr;
    height: 64px;
    margin: 0 5px 0 4px;
    border: solid #d3d5de;
    border-width: 1px 1px 0;
}

.group{
    position: relative;
    display: flex;
    flex-direction: column;
    border-right: 1px solid #d3d5de;
}

.group.end{
    border: 0;
    align-items: flex-end;
    justify-content: flex-end;
    padding: 6px 8px;
}

.group h2{
    font-size: 8px;
    font-weight: normal;
    text-align: center;
}

.cols{
    display: flex;
    height: 50px;
    padding: 3px 0 0 6px;
}

.col{
    display: flex;
    flex-direction: column;
    align-items: flex-start;
}

.c-view{
    width: 54px;
}

.ruled{
    border-left: 1px solid #d3d5de;
    padding-left: 3px;
}

.c-edges{
    width: 70px;
}

.c-cut{
    width: 75px;
}

.c-add{
    width: 76px;
}

.cmd{
    height: 15px;
    display: flex;
    align-items: center;
    gap: 4px;
    padding: 0 2px;
}

.cmd svg{
    width: 10px;
    height: 10px;
}

.c-cut,.c-edges{
    margin-left: -3px;
}

.cmd.picked{
    padding: 0 3px 0 2px;
    background: #eaf2fb;
    outline: 1px solid #55a5e0;
}

.off{
    color: #9a9aa0;
}

.off use{
    opacity: .6;
}

.corner{
    position: absolute;
    right: 4px;
    bottom: 4px;
    border-left: 4px solid transparent;
    border-bottom: 4px solid #666;
}

.pick{
    position: relative;
    width: 68px;
    height: 14px;
    margin-left: 3px;
}

.pick.narrow{
    width: 54px;
}

.pick select{
    appearance: none;
    width: 100%;
    height: 14px;
    padding-left: 3px;
    border: 1px solid #d0d2dc;
}

.pick .caret{
    position: absolute;
    right: 4px;
    top: 6px;
}

.precision{
    display: flex;
    align-items: center;
    height: 16px;
    margin-left: 3px;
    gap: 2px;
}

.spin{
    width: 28px;
    height: 14px;
    display: flex;
    align-items: center;
    padding: 0 2px;
    border: 1px solid #d0d2dc;
}

.spin input{
    width: 17px;
}

.spin span{
    display: flex;
    flex-direction: column;
    gap: 3px;
}

.big{
    display: flex;
    flex-direction: column;
    align-items: center;
    padding-top: 4px;
}

.big span{
    width: 23px;
    height: 22px;
    display: flex;
    align-items: center;
    justify-content: center;
    margin-bottom: 1px;
    border: 1px solid #d3d5de;
}

.big svg{
    width: 11px;
    height: 11px;
}

/* side panel */

.work{
    flex: 1;
    min-height: 0;
    display: flex;
    padding-right: 5px;
}

.side{
    width: 237px;
    display: flex;
    flex-direction: column;
    padding: 2px 2px 2px 8px;
}

.tabs{
    display: flex;
    align-items: center;
    height: 18px;
}

.tabs button{
    height: 100%;
    padding: 0 7px;
    border-right: 1px solid #d3d5de;
    border-top: 1px solid #d3d5de;
}

.tabs .active{
    color: #1a86d6;
    background: #f5f5fa;
}

.tabs.slim{
    height: 15px;
}

.tabs.slim button{
    padding: 0 4px;
}

.tabs.lower{
    margin-top: 3px;
}

.tabs.lower button:nth-of-type(4){
    border-right: 0;
    padding-right: 4px;
}

.tabs .arrow.back{
    margin-right: 9px;
}

.tree{
    flex: 1;
    min-height: 0;
    display: flex;
    overflow: hidden;
    background: #fff;
    border: 1px solid #c9ccd8;
}

.tree table,.props table{
    flex: 1;
    table-layout: fixed;
    border-collapse: collapse;
    align-self: flex-start;
}

.props table{
    width: 100%;
}

th{
    height: 14px;
    font-weight: normal;
    border-bottom: 1px solid #d3d5e0;
}

th + th,td + td{
    border-left: 1px solid #d3d5e0;
}

.val{
    width: 65px;
}

td{
    height: 13px;
    line-height: 12px;
    border-bottom: 1px solid #d3d5e0;
}

td:nth-child(2){
    text-align: right;
    padding-right: 2px;
}

.tree .selected{
    background: #dedede;
}

.node{
    height: 12px;
    display: flex;
    align-items: center;
    gap: 4px;
    padding-left: 18px;
    white-space: nowrap;
}

.node .arrow{
    width: 3px;
    margin-right: 1px;
}

.node .arrow.open{
    width: 5px;
    margin: 0 0 0 -1px;
}

.node.leaf{
    padding-left: 39px;
}

.node input{
    appearance: none;
    width: 9px;
    height: 9px;
    border: 1px solid #cfcfd4;
    background: #fff;
}

.node input:checked::after{
    content: "";
    display: block;
    width: 3px;
    height: 6px;
    margin: -1px 0 0 2px;
    border: solid #555;
    border-width: 0 1px 1px 0;
    transform: rotate(40deg);
}

.node svg,.box{
    width: 12px;
    height: 12px;
}

.box{
    background: linear-gradient(135deg, #ecbf6c, #d39a3c);
}

.scroll{
    flex: none;
    width: 13px;
    display: flex;
    flex-direction: column;
    align-items: center;
    justify-content: space-between;
    padding: 17px 0 4px;
    background: #eeeef3;
}

.scroll b{
    width: 7px;
    height: 14px;
    margin-top: 0;
    background: #c2c2c6;
}

.props{
    height: 149px;
    background: #fff;
    border: 1px solid #c9ccd8;
}

.props td:first-child{
    padding-left: 2px;
}

.props .selected{
    background: #cdd2dd;
}

/* 3d view */

.view{
    flex: 1;
    min-width: 0;
    position: relative;
    overflow: hidden;
}

.scene{
    display: block;
    width: 100%;
    height: 100%;
}

.hint{
    position: absolute;
    left: 2px;
    bottom: 1px;
    color: #000;
    font-size: 10px;
    font-weight: bold;
}

/* status bar */

.status{
    display: flex;
    align-items: center;
    height: 19px;
    padding: 0 11px;
    background: #0078cc;
}

.reset{
    display: flex;
    align-items: center;
    gap: 4px;
    width: 75px;
    color: #fff;
}

.reset svg{
    width: 10px;
    height: 10px;
}

.crumbs{
    width: 445px;
    height: 14px;
    display: flex;
    align-items: center;
    gap: 8px;
    padding: 0 4px;
    background: #eeeef3;
}

.crumbs a{
    color: inherit;
    text-decoration: none;
    white-space: nowrap;
}

.crumbs .caret{
    margin-left: auto;
}

.progress{
    width: 216px;
    height: 14px;
    margin-left: auto;
    background: #eeeef3;
}
```
